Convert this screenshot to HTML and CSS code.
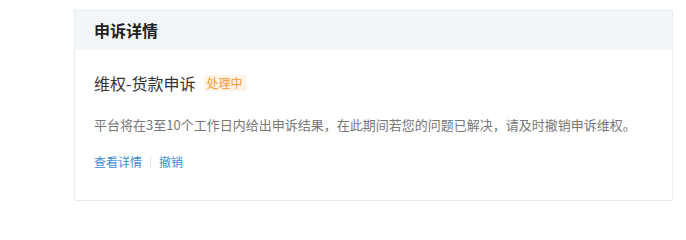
FILE: index.html
```html
<!DOCTYPE html>
<html lang="zh-CN">
<head>
<meta charset="utf-8">
<link rel="stylesheet" href="styles.css">
</head>
<body>
<div class="page">
  <section class="card">
    <header class="card-head">申诉详情</header>
    <div class="card-body">
      <div class="title-row">
        <span class="title">维权-货款申诉</span>
        <span class="badge">处理中</span>
      </div>
      <p class="desc">平台将在3至10个工作日内给出申诉结果，在此期间若您的问题已解决，请及时撤销申诉维权。</p>
      <div class="actions">
        <a class="link">查看详情</a>
        <span class="sep"></span>
        <a class="link">撤销</a>
      </div>
    </div>
  </section>
</div>
</body>
</html>
```
FILE: styles.css
```css
html, body {
  margin: 0;
  padding: 0;
  background: #fff;
}
body {
  font-family: "Microsoft YaHei", "Noto Sans CJK SC", "Noto Sans", sans-serif;
  color: #333;
}
.page {
  padding: 10px 0 0 74px;
}
.card {
  width: 597px;
  border: 1px solid #e9ecee;
  background: #fff;
}
.card-head {
  height: 39px;
  line-height: 39px;
  background: #f3f6f8;
  padding-left: 19px;
  font-size: 16px;
  font-weight: bold;
  color: #222;
}
.card-body {
  padding: 21px 19px 29px;
}
.title-row {
  display: flex;
  align-items: center;
  height: 24px;
}
.title {
  font-size: 16px;
  color: #333;
  line-height: 24px;
}
.badge {
  margin-left: 8px;
  font-size: 12px;
  line-height: 16px;
  padding: 0 3px;
  color: #f39b34;
  background: #fff3e5;
}
.desc {
  margin: 20px 0 0;
  font-size: 13px;
  line-height: 20px;
  color: #777;
}
.actions {
  margin-top: 18px;
  display: flex;
  align-items: center;
  height: 18px;
}
.link {
  font-size: 12px;
  line-height: 18px;
  color: #3a8bd8;
  cursor: pointer;
}
.sep {
  width: 1px;
  height: 11px;
  background: #e3e3e3;
  margin: 0 8px;
}
```
